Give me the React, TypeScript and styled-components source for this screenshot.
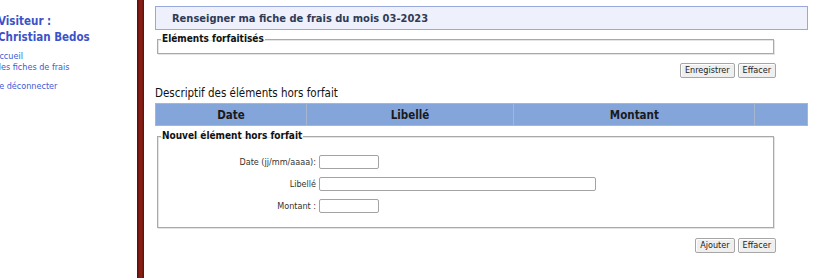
import styled, { createGlobalStyle } from "styled-components";

const GlobalStyle = createGlobalStyle`
  html, body {
    margin: 0;
    padding: 0;
    background: #ffffff;
  }
  body {
    font-family: "DejaVu Sans Condensed", "DejaVu Sans", Verdana, sans-serif;
    color: #222;
  }
`;

const Page = styled.div`
  display: flex;
  width: 819px;
  height: 278px;
  overflow: hidden;
`;

/* menu de gauche */
const Sidebar = styled.nav`
  width: 137px;
  flex-shrink: 0;
  overflow: hidden;
  padding-top: 13px;
`;

const Visitor = styled.h2`
  margin: 0 0 6px -2px;
  font-size: 11.5px;
  line-height: 16px;
  font-weight: bold;
  color: #3c52c9;
`;

const MenuList = styled.ul`
  list-style: none;
  margin: 0 0 0 -6px;
  padding: 0;
`;

const MenuItem = styled.li<{ $gap?: boolean }>`
  font-size: 9px;
  line-height: 11px;
  margin-top: ${({ $gap }) => ($gap ? "8px" : "0")};

  a {
    color: #3d5bd6;
    text-decoration: none;
  }
`;

const Separator = styled.div`
  width: 7px;
  flex-shrink: 0;
  background: linear-gradient(to right, #4f0c07 0, #7e1a12 30%, #8a2016 60%, #5e0f09 100%);
`;

const Content = styled.main`
  flex: 1;
  padding: 6px 11px 0 11px;
`;

const TitleBox = styled.div`
  height: 22px;
  border: 1px solid #98a7dc;
  background: #eef0fb;
  display: flex;
  align-items: center;
  padding-left: 16px;
`;

const Title = styled.h2`
  margin: 0;
  font-size: 11px;
  font-weight: bold;
  color: #2e3b56;
`;

const Fieldset = styled.fieldset<{ $top: number }>`
  margin: ${({ $top }) => $top}px 34px 0 2px;
  padding: 0 6px;
  border: 1px solid #a9a9a9;
  box-shadow: inset 1px 1px 0 #e4e4e4, 1px 1px 0 #e4e4e4;
`;

const Legend = styled.legend`
  padding: 0 1px;
  margin-left: -3px;
  font-size: 10px;
  line-height: 12px;
  font-weight: bold;
  color: #111;
`;

const EmptyBody = styled.div`
  height: 8px;
`;

const ButtonRow = styled.div<{ $top: number }>`
  display: flex;
  justify-content: flex-end;
  gap: 3px;
  margin: ${({ $top }) => $top}px 32px 0 0;
`;

const Button = styled.button`
  font-family: inherit;
  font-size: 9px;
  line-height: 11px;
  height: 15px;
  padding: 0 4px;
  color: #222;
  background: #efefef;
  border: 1px solid #a6a6a6;
  border-radius: 2px;
  box-shadow: inset 1px 1px 0 #ffffff;
`;

const SectionTitle = styled.h3`
  margin: 8px 0 3px;
  font-size: 11.5px;
  line-height: 14px;
  font-weight: normal;
  color: #111;
`;

const Table = styled.table`
  width: 100%;
  border-collapse: collapse;
`;

const HeadCell = styled.th<{ $w: number }>`
  width: ${({ $w }) => $w}px;
  height: 21px;
  padding: 0;
  background: #84a5da;
  border: 1px solid #a7b6cf;
  font-size: 11.5px;
  line-height: 14px;
  font-weight: bold;
  color: #1a1a1a;
  text-align: center;
`;

const FormBody = styled.div`
  padding: 13px 0 14px;
  display: flex;
  flex-direction: column;
  gap: 8px;
`;

const FieldRow = styled.div`
  display: grid;
  grid-template-columns: 152px 1fr;
  align-items: center;
  column-gap: 3px;
`;

const Label = styled.label`
  font-size: 9px;
  color: #333;
  text-align: right;
`;

const Input = styled.input<{ $w: number }>`
  box-sizing: border-box;
  width: ${({ $w }) => $w}px;
  height: 14px;
  padding: 0 2px;
  border: 1px solid #a3a3a3;
  border-radius: 2px;
  font-family: inherit;
  font-size: 9px;
`;

export default function App() {
  return (
    <>
      <GlobalStyle />
      <Page>
        <Sidebar>
          <Visitor>
            Visiteur :<br />
            Christian Bedos
          </Visitor>
          <MenuList>
            <MenuItem>
              <a href="#">Accueil</a>
            </MenuItem>
            <MenuItem>
              <a href="#">Mes fiches de frais</a>
            </MenuItem>
            <MenuItem $gap>
              <a href="#">Se déconnecter</a>
            </MenuItem>
          </MenuList>
        </Sidebar>
        <Separator />
        <Content>
          <TitleBox>
            <Title>Renseigner ma fiche de frais du mois 03-2023</Title>
          </TitleBox>

          <Fieldset $top={3}>
            <Legend>Eléments forfaitisés</Legend>
            <EmptyBody />
          </Fieldset>
          <ButtonRow $top={9}>
            <Button>Enregistrer</Button>
            <Button>Effacer</Button>
          </ButtonRow>

          <SectionTitle>Descriptif des éléments hors forfait</SectionTitle>
          <Table>
            <thead>
              <tr>
                <HeadCell $w={151}>Date</HeadCell>
                <HeadCell $w={208}>Libellé</HeadCell>
                <HeadCell $w={242}>Montant</HeadCell>
                <HeadCell $w={52}></HeadCell>
              </tr>
            </thead>
          </Table>

          <Fieldset $top={4}>
            <Legend>Nouvel élément hors forfait</Legend>
            <FormBody>
              <FieldRow>
                <Label htmlFor="date">Date (jj/mm/aaaa):</Label>
                <Input id="date" $w={60} />
              </FieldRow>
              <FieldRow>
                <Label htmlFor="libelle">Libellé</Label>
                <Input id="libelle" $w={277} />
              </FieldRow>
              <FieldRow>
                <Label htmlFor="montant">Montant :</Label>
                <Input id="montant" $w={60} />
              </FieldRow>
            </FormBody>
          </Fieldset>
          <ButtonRow $top={10}>
            <Button>Ajouter</Button>
            <Button>Effacer</Button>
          </ButtonRow>
        </Content>
      </Page>
    </>
  );
}
